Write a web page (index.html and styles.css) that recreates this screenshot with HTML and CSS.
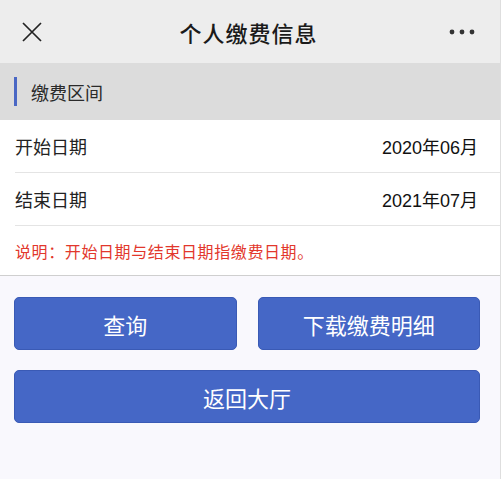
FILE: index.html
```html
<!DOCTYPE html>
<html lang="zh-CN">
<head>
  <meta charset="UTF-8" />
  <meta name="viewport" content="width=device-width, initial-scale=1.0"/>
  <title>个人缴费信息</title>
  <link rel="stylesheet" href="styles.css">
</head>
<body>

<div class="page">
  <!-- Top bar -->
  <header class="topbar">
    <span class="close">
      <svg width="20" height="20" viewBox="0 0 20 20"><path d="M1 1L19 19M19 1L1 19" stroke="#222" stroke-width="1.7" fill="none"/></svg>
    </span>
    <h1>个人缴费信息</h1>
    <span class="more">
      <svg width="26" height="6" viewBox="0 0 26 6"><circle cx="3" cy="3" r="2.4" fill="#333"/><circle cx="13" cy="3" r="2.4" fill="#333"/><circle cx="23" cy="3" r="2.4" fill="#333"/></svg>
    </span>
  </header>

  <!-- Range -->
  <div class="section-title"><span class="bar"></span>缴费区间</div>
  <ul class="rows">
    <li class="row"><span>开始日期</span><span class="date">2020年06月</span></li>
    <li class="row"><span>结束日期</span><span class="date">2021年07月</span></li>
    <li class="note">说明：开始日期与结束日期指缴费日期。</li>
  </ul>

  <!-- Actions -->
  <div class="actions">
    <button class="btn">查询</button>
    <button class="btn">下载缴费明细</button>
    <button class="btn wide">返回大厅</button>
  </div>
</div>

</body>
</html>
```

FILE: styles.css
```css
body { margin: 0; background: #fff; font-family: "Liberation Sans", "Noto Sans CJK SC", sans-serif; color: #222; }
.page { width: 500px; height: 479px; background: #f9f8fd; border-right: 1px solid #dedede; }

.topbar { height: 63px; background: #ededed; display: flex; align-items: center; justify-content: space-between; padding: 0 25px 0 22px; box-sizing: border-box; }
.topbar h1 { margin: 0; font-size: 22px; font-weight: 500; color: #1a1a1a; letter-spacing: 1px; }
.close, .more { display: flex; width: 26px; }
.more { justify-content: flex-end; }

.section-title { height: 57px; background: #dcdcdc; display: flex; align-items: center; padding-left: 14px; font-size: 18px; color: #2a2a2a; }
.section-title .bar { width: 3px; height: 29px; background: #4a67c4; margin-right: 14px; }

.rows { list-style: none; margin: 0; padding: 0 0 0 15px; background: #fff; border-bottom: 1px solid #cfcfcf; }
.row { height: 52px; display: flex; align-items: center; justify-content: space-between; padding-right: 22px; font-size: 18px; border-bottom: 1px solid #e4e4e4; }
.date { font-size: 18px; color: #111; }
.note { height: 49px; display: flex; align-items: center; font-size: 16px; letter-spacing: 0.6px; color: #e2372c; }

.actions { display: grid; grid-template-columns: 1fr 1fr; gap: 20px 21px; padding: 21px 20px 0 14px; }
.btn { height: 53px; background: #4567c6; color: #fff; border: 1px solid #3a5ab5; border-radius: 5px; font-family: "Noto Sans CJK SC", sans-serif; font-size: 22px; cursor: pointer; }
.btn.wide { grid-column: 1 / 3; }
```
